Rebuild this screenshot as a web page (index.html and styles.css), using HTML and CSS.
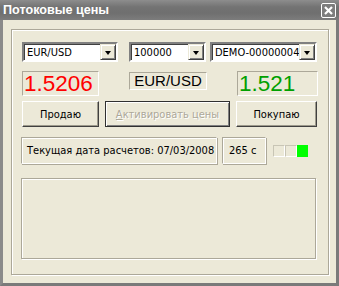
FILE: index.html
```html
<!doctype html>
<html lang="ru">
  <head>
    <meta charset="utf-8">
    <title>Потоковые цены</title>
    <link rel="stylesheet" href="styles.css">
  </head>
  <body>
    <div class="window">
      <header class="titlebar">
        <span class="title">Потоковые цены</span>
        <span class="close">
          <svg width="15" height="15" viewBox="0 0 15 15">
            <rect x="0.5" y="0.5" width="14" height="14" rx="1.5" fill="#7d7d7d" stroke="#fff"/>
            <path d="M4 4 L11 11 M11 4 L4 11" stroke="#fff" stroke-width="2.2"/>
          </svg>
        </span>
      </header>

      <div class="client">
        <div class="group">
          <div class="row combos">
            <div class="combo w-pair"><span>EUR/USD</span><i class="arrow"></i></div>
            <div class="combo w-amount"><span>100000</span><i class="arrow"></i></div>
            <div class="combo w-account"><span>DEMO-00000004</span><i class="arrow"></i></div>
          </div>

          <div class="row prices">
            <div class="price sell">1.5206</div>
            <div class="symbol">EUR/USD</div>
            <div class="price buy">1.521</div>
          </div>

          <div class="row buttons">
            <button class="btn w-sell">Продаю</button>
            <button class="btn default" disabled><u>А</u>ктивировать цены</button>
            <button class="btn w-buy">Покупаю</button>
          </div>

          <div class="row status">
            <div class="field date">Текущая дата расчетов: 07/03/2008</div>
            <div class="field timer">265 с</div>
            <div class="lights">
              <i class="light"></i><i class="light"></i><i class="light on"></i>
            </div>
          </div>

          <div class="log"></div>
        </div>
      </div>
    </div>
  </body>
</html>
```

FILE: styles.css
```css
:root {
  --face: #ece9d8;
  --shade: #aca899;
  --hi: #ffffff;
  --ui-font: "DejaVu Sans Condensed", "DejaVu Sans", sans-serif;
}

html, body {
  margin: 0;
  padding: 0;
  background: var(--face);
}

body {
  font-family: var(--ui-font);
  font-size: 11px;
  color: #000;
}

.window {
  width: 339px;
  height: 286px;
  box-sizing: border-box;
  border: 3px solid #7a7a7a;
  border-top: 0;
  border-left-color: #8a8a8a;
  display: flex;
  flex-direction: column;
  background: var(--face);
}

.titlebar {
  height: 20px;
  margin: 0 -3px;
  padding: 0 3px 0 3px;
  display: flex;
  align-items: center;
  justify-content: space-between;
  background: linear-gradient(#8d8d8d, #737373 35%, #6f6f6f 65%, #7c7c7c);
}

.title {
  color: #fff;
  font-family: "Liberation Sans", Arial, sans-serif;
  font-weight: bold;
  font-size: 12.6px;
}

.close {
  display: flex;
  margin-top: 1px;
}

.client {
  flex: 1;
  padding: 9px 8px 8px 8px;
  display: flex;
}

.group {
  flex: 1;
  border: 1px solid var(--shade);
  box-shadow: inset 1px 1px var(--hi), 1px 1px var(--hi);
  padding: 12px 10px 0 10px;
  display: flex;
  flex-direction: column;
}

.row {
  display: flex;
  align-items: center;
}

/* combo boxes */
.combos {
  height: 20px;
}

.combo {
  height: 20px;
  box-sizing: border-box;
  border: 2px solid;
  border-color: #808080 #fff #fff #808080;
  box-shadow: inset 1px 1px #404040;
  background: #fff;
  display: flex;
  align-items: center;
  padding-left: 3px;
}

.combo span {
  flex: 1;
  white-space: nowrap;
  overflow: hidden;
}

.arrow {
  width: 16px;
  height: 16px;
  flex: none;
  box-sizing: border-box;
  background: var(--face);
  border: 1px solid;
  border-color: var(--face) #404040 #404040 var(--face);
  box-shadow: inset 1px 1px #fff, inset -1px -1px #808080;
  position: relative;
}

.arrow::after {
  content: "";
  position: absolute;
  left: 4px;
  top: 6px;
  border-left: 3.5px solid transparent;
  border-right: 3.5px solid transparent;
  border-top: 4px solid #000;
}

.w-pair { width: 96px; }
.w-amount { width: 77px; margin-left: 11px; }
.w-account { width: 107px; margin-left: 4px; }

/* prices */
.prices {
  margin-top: 9px;
  height: 25px;
  font-family: "Liberation Sans", Arial, sans-serif;
}

.price {
  height: 25px;
  box-sizing: border-box;
  border: 1px solid;
  border-color: var(--shade) #fff #fff var(--shade);
  font-size: 22.5px;
  line-height: 23px;
  padding-left: 1px;
}

.sell {
  width: 77px;
  color: #ff0000;
}

.buy {
  width: 81px;
  color: #00a000;
  margin-left: 30px;
}

.symbol {
  width: 78px;
  height: 18px;
  box-sizing: border-box;
  margin-left: 30px;
  margin-top: -6px;
  border: 1px solid;
  border-color: var(--shade) #fff #fff var(--shade);
  font-size: 15px;
  line-height: 16px;
  text-align: center;
}

/* buttons */
.buttons {
  margin-top: 5px;
  height: 26px;
}

.btn {
  height: 26px;
  box-sizing: border-box;
  font: inherit;
  color: #000;
  background: var(--face);
  border: 1px solid;
  border-color: #fff #404040 #404040 #fff;
  box-shadow: inset -1px -1px #9d9a8c;
  padding: 0;
}

.w-sell { width: 77px; }

.btn.default {
  width: 125px;
  margin-left: 6px;
  border: 1px solid #303030;
  box-shadow: inset 1px 1px #fff, inset -1px -1px #808080;
  color: #aca899;
  text-shadow: 1px 1px #fff;
}

.w-buy {
  width: 81px;
  margin-left: 6px;
}

/* status line */
.status {
  margin-top: 10px;
  margin-left: -1px;
  height: 27px;
}

.field {
  height: 27px;
  box-sizing: border-box;
  border: 1px solid;
  border-color: var(--shade) #fff #fff var(--shade);
  box-shadow: 1px 1px var(--shade), inset 1px 1px #fff;
  display: flex;
  align-items: center;
  white-space: nowrap;
}

.date {
  width: 196px;
  padding-left: 5px;
}

.timer {
  width: 44px;
  margin-left: 5px;
  padding-left: 6px;
}

.lights {
  display: flex;
  margin-left: 7px;
}

.light {
  width: 12px;
  height: 12px;
  box-sizing: border-box;
  border: 1px solid;
  border-color: #c8c5b5 #fff #fff #c8c5b5;
  background: var(--face);
}

.light.on {
  width: 11px;
  border: 0;
  background: #00ff00;
}

/* message panel */
.log {
  margin-top: 14px;
  margin-left: -1px;
  width: 295px;
  height: 81px;
  box-sizing: border-box;
  border: 1px solid var(--shade);
  box-shadow: inset 1px 1px #fff, 1px 1px #fff;
}
```
